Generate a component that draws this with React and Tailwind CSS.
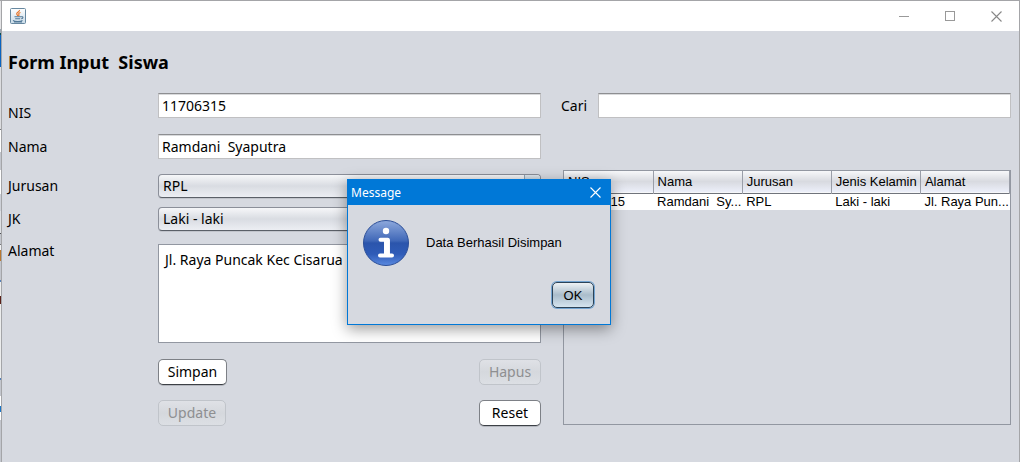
import React from "react";

const tahoma = "font-['Noto_Sans',sans-serif]";
const fieldClass =
  "block h-[25px] w-full min-w-0 border border-[#c0c0c2] border-t-[#8d8e91] bg-white px-[3px] text-sm leading-5 text-black shadow-[inset_0_1px_0_#d9dadc] outline-none";

function Field({ id, label, children, className, labelClass }) {
  return (
    <div className={`flex items-start ${className}`}>
      <label htmlFor={id} className={`w-[150px] shrink-0 text-sm leading-5 ${labelClass}`}>
        {label}
      </label>
      <div className="min-w-0 flex-1">{children}</div>
    </div>
  );
}

function Combo({ id, value, options }) {
  return (
    <div className="flex h-6 overflow-hidden rounded-[4px] border border-[#8b8f99] border-b-[#5b6068] bg-linear-to-b from-[#f6f7f9] via-[#d9dce2] to-[#eceef3] shadow-[0_1px_0_#c2c5cc]">
      <select id={id} defaultValue={value} className="min-w-0 flex-1 appearance-none bg-transparent px-1 text-sm leading-5 outline-none">
        {options.map((o) => (
          <option key={o}>{o}</option>
        ))}
      </select>
      <span className="flex w-4 items-center justify-center border-l border-[#8fa3b5] bg-linear-to-b from-[#dfe7ee] via-[#a9bccb] to-[#d2e0ea]">
        <svg width="7" height="5" viewBox="0 0 7 5" aria-hidden="true">
          <path d="M0 0h7L3.500 5z" fill="#222" />
        </svg>
      </span>
    </div>
  );
}

function Button({ children, disabled, className }) {
  const look = disabled
    ? "border-[#c0c4ca] bg-linear-to-b from-[#dfe1e6] via-[#d5d8dd] to-[#dcdfe4] text-[#8e8f91]"
    : "border-[#7d8086] border-b-[#3c4046] bg-white text-black shadow-[0_1px_0_#b4b7be]";
  return (
    <button type="button" disabled={disabled} className={`h-[26px] rounded-[5px] border text-sm leading-5 ${look} ${className}`}>
      {children}
    </button>
  );
}

function JavaIcon() {
  return (
    <svg width="16" height="16" viewBox="0 0 16 16" aria-hidden="true">
      <defs>
        <linearGradient id="cup" x1="0" y1="0" x2="0" y2="1">
          <stop offset="0" stopColor="#fff" />
          <stop offset="1" stopColor="#c9dbe8" />
        </linearGradient>
      </defs>
      <rect x=".5" y=".5" width="15" height="15" rx="1" fill="url(#cup)" stroke="#6788a0" />
      <path d="M9.500 2c.6 1.500-3 2.300-2.800 3.800.1.900 1 1.200.9 2.200M10.500 4.500C9 5 8.300 5.600 8.900 6.500c.4.700 0 1.100-.5 1.500" fill="none" stroke="#e8762b" strokeWidth="1.200" />
      <path d="M4.500 8.800h6.500M5.200 10.700h5M11 8.800c2.600-.5 2.500 1.700.2 2M3 12.500c2 1.300 7.500 1.200 9.500 0M4 14h8" fill="none" stroke="#527998" strokeWidth="1.100" />
    </svg>
  );
}

function InfoIcon() {
  return (
    <svg width="48" height="48" viewBox="0 0 48 48" className="shrink-0" aria-hidden="true">
      <defs>
        <linearGradient id="ball" x1="0" y1="0" x2="0" y2="1">
          <stop offset="0" stopColor="#8ea9dc" />
          <stop offset=".45" stopColor="#4068b8" />
          <stop offset=".5" stopColor="#2b55ac" />
          <stop offset=".75" stopColor="#2f5cb8" />
          <stop offset="1" stopColor="#5b8ae0" />
        </linearGradient>
      </defs>
      <circle cx="24" cy="24" r="22.500" fill="url(#ball)" stroke="#2c4f98" />
      <circle cx="24" cy="12" r="3.200" fill="#fff" />
      <path d="M18.500 20.800h7.300V36.500M18 36.500h12" fill="none" stroke="#fff" strokeWidth="4" strokeLinecap="round" strokeLinejoin="round" />
      <path d="M24 20.500h3.800v16H22v-15z" fill="#fff" />
    </svg>
  );
}

const strip = [
  ["h-7", "bg-[#e4e4e6]"],
  ["h-1", "bg-[#9aa7b2]"],
  ["h-[2px]", "bg-[#0b4d52]"],
  ["h-8", "bg-[#0a63c0]"],
  ["h-[62px]", "bg-[#dcdde0]"],
  ["h-px", "bg-[#77797d]"],
  ["h-[22px]", "bg-white"],
  ["h-[18px]", "bg-[#c3c6cd]"],
  ["h-6", "bg-white"],
  ["h-[17px]", "bg-[#cdd0d7]"],
  ["h-[22px]", "bg-[#dfe1e5]"],
  ["h-px", "bg-[#4d5055]"],
  ["h-[10px]", "bg-[#c3c6cd]"],
  ["h-px", "bg-[#77797d]"],
  ["h-[5px]", "bg-[#f1f2f4]"],
  ["h-[11px]", "bg-[#b97830]"],
  ["h-[19px]", "bg-[#c3c6cd]"],
  ["h-[2px]", "bg-[#5580b8]"],
  ["h-[14px]", "bg-[#eceded]"],
  ["h-2", "bg-[#5a2018]"],
  ["h-[74px]", "bg-[#eceded]"],
  ["h-[2px]", "bg-[#5580b8]"],
  ["h-4", "bg-[#c3c6cd]"],
  ["h-[10px]", "bg-white"],
  ["h-[6px]", "bg-[#1a76c8]"],
  ["h-2", "bg-white"],
  ["flex-1", "bg-[#c3c6cd]"],
];

const columns = ["NIS", "Nama", "Jurusan", "Jenis Kelamin", "Alamat"];
const rows = [["11706315", "Ramdani  Sy...", "RPL", "Laki - laki", "Jl. Raya Pun..."]];

export default function App() {
  return (
    <div className={`relative flex min-h-screen bg-[#a4a5a8] pt-px text-black ${tahoma}`}>
      <div className="flex w-px flex-col" aria-hidden="true">
        {strip.map(([h, c], i) => (
          <div key={i} className={`${h} ${c}`} />
        ))}
      </div>
      <div className="ml-px mr-px flex min-w-0 flex-1 flex-col bg-[#d6d9e0]">
        <header className="flex h-[30px] items-center justify-between bg-white pl-2">
          <JavaIcon />
          <div className="flex">
            <button type="button" aria-label="Minimize" className="flex h-[30px] w-[46px] items-center justify-center">
              <svg width="11" height="11" viewBox="0 0 11 11"><path d="M0 5.500h10" stroke="#999" /></svg>
            </button>
            <button type="button" aria-label="Maximize" className="flex h-[30px] w-[46px] items-center justify-center">
              <svg width="11" height="11" viewBox="0 0 11 11"><rect x=".5" y=".5" width="9" height="9" fill="none" stroke="#999" /></svg>
            </button>
            <button type="button" aria-label="Close" className="flex h-[30px] w-[46px] items-center justify-center">
              <svg width="11" height="11" viewBox="0 0 11 11"><path d="M.5.5l10 10M10.500.5l-10 10" stroke="#888" strokeWidth="1.100" /></svg>
            </button>
          </div>
        </header>
        <main className="pl-[6px] pr-2 pt-[19px]">
          <h1 className="whitespace-pre text-lg leading-6 font-bold">Form Input  Siswa</h1>
          <div className="flex gap-5 pt-[19px]">
            <form className="min-w-0 flex-[533]">
              <Field id="nis" label="NIS" labelClass="pt-[10px]">
                <input id="nis" defaultValue="11706315" className={fieldClass} />
              </Field>
              <Field id="nama" label="Nama" labelClass="pt-[3px]" className="pt-[11px]">
                <input id="nama" defaultValue="Ramdani  Syaputra" className={fieldClass} />
              </Field>
              <Field id="jurusan" label="Jurusan" labelClass="pt-[2px]" className="pt-[15px]">
                <Combo id="jurusan" value="RPL" options={["RPL", "TKJ", "MM"]} />
              </Field>
              <Field id="jk" label="JK" labelClass="pt-[2px]" className="pt-[9px]">
                <Combo id="jk" value="Laki - laki" options={["Laki - laki", "Perempuan"]} />
              </Field>
              <Field id="alamat" label="Alamat" labelClass="pt-0" className="pt-[10px]">
                <textarea
                  id="alamat"
                  defaultValue="Jl. Raya Puncak Kec Cisarua"
                  className="mt-[3px] block h-[99px] w-full resize-none border border-[#9297a1] bg-white px-[6px] py-[5px] text-sm leading-5 outline-none"
                />
              </Field>
              <div className="flex flex-col gap-[15px] pt-4 pl-[150px]">
                <div className="flex justify-between">
                  <Button className="w-[69px]">Simpan</Button>
                  <Button disabled className="w-[62px]">Hapus</Button>
                </div>
                <div className="flex justify-between">
                  <Button disabled className="w-[68px]">Update</Button>
                  <Button className="w-[62px]">Reset</Button>
                </div>
              </div>
            </form>
            <section className="flex min-w-0 flex-[450] flex-col pb-px">
              <div className="flex items-center">
                <label htmlFor="cari" className="w-[37px] shrink-0 text-sm leading-5">Cari</label>
                <input id="cari" className={fieldClass} />
              </div>
              <div className="mt-[52px] ml-[2px] flex-1 border border-[#9297a1] font-['Liberation_Sans',sans-serif] text-[13px]">
                <table className="w-full table-fixed border-collapse">
                  <thead>
                    <tr className="h-[22px] border-b border-[#6f737b] bg-linear-to-b from-[#f7f8fa] via-[#d8dae0] to-[#eceffa]">
                      {columns.map((c) => (
                        <th key={c} className="border-r border-[#9a9ea8] p-0 pl-1 text-left leading-4 font-normal whitespace-nowrap">{c}</th>
                      ))}
                    </tr>
                  </thead>
                  <tbody>
                    {rows.map((r) => (
                      <tr key={r[0]} className="h-4 bg-white">
                        {r.map((v) => (
                          <td key={v} className="p-0 pl-1 leading-4 whitespace-pre">{v}</td>
                        ))}
                      </tr>
                    ))}
                  </tbody>
                </table>
              </div>
            </section>
          </div>
        </main>
      </div>

      <div
        role="dialog"
        aria-labelledby="dialog-title"
        className="absolute top-[179px] left-[347px] w-[264px] border border-[#0078d7] bg-[#d6d9e0] shadow-[0_4px_14px_rgba(0,0,0,0.4)]"
      >
        <div className="flex h-[25px] items-center justify-between bg-[#0078d7] pl-[3px] text-white">
          <h2 id="dialog-title" className="text-xs leading-4">Message</h2>
          <button type="button" aria-label="Close message" className="flex h-[25px] w-[30px] items-center justify-center">
            <svg width="11" height="11" viewBox="0 0 11 11"><path d="M.5.5l10 10M10.500.5l-10 10" stroke="#fff" strokeWidth="1.100" /></svg>
          </button>
        </div>
        <div className="flex items-center gap-4 px-[14px] pt-[14px] font-['Liberation_Sans',sans-serif] text-[13px]">
          <InfoIcon />
          <p className="leading-4">Data Berhasil Disimpan</p>
        </div>
        <div className="flex justify-end px-4 pt-[15px] pb-4 font-['Liberation_Sans',sans-serif]">
          <button
            type="button"
            className="h-[26px] w-[42px] rounded-[5px] border border-[#2c4358] bg-linear-to-b from-[#eef2f5] via-[#a9bccb] to-[#d5e4ef] pt-px text-[13px] leading-4 shadow-[0_0_0_1px_#73a4d1]"
          >
            OK
          </button>
        </div>
      </div>
    </div>
  );
}
